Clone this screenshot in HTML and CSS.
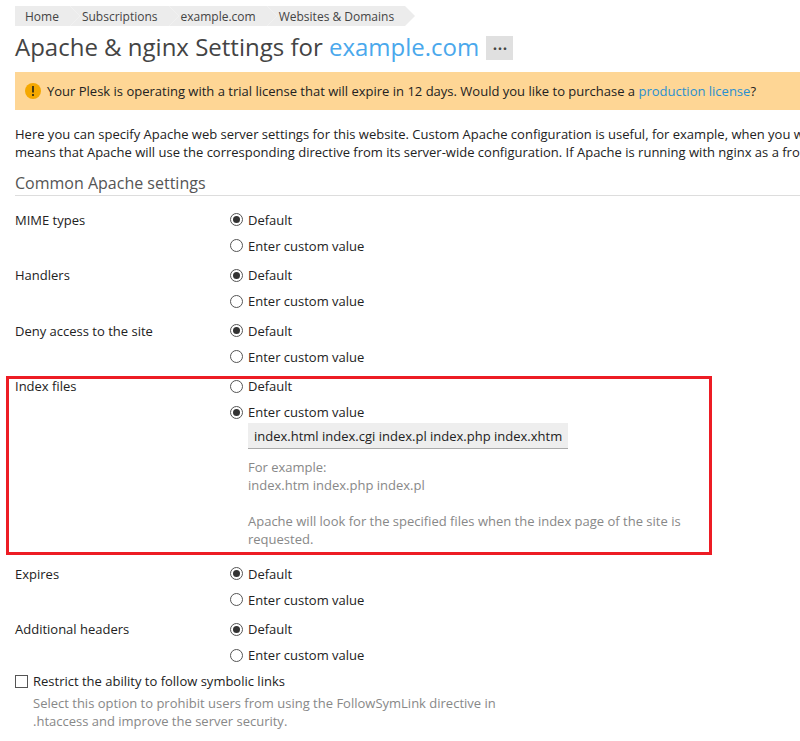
FILE: index.html
```html
<!DOCTYPE html>
<html lang="en">
<head>
    <meta charset="UTF-8">
    <title>Apache &amp; nginx Settings for example.com</title>
    <link rel="stylesheet" href="styles.css">
</head>
<body>
    <nav class="breadcrumbs">
        <a class="crumb">Home</a>
        <a class="crumb">Subscriptions</a>
        <a class="crumb">example.com</a>
        <a class="crumb">Websites &amp; Domains</a>
    </nav>
    <h1 class="title">Apache &amp; nginx Settings for <a class="title-link">example.com</a> <span class="more-btn">&middot;&middot;&middot;</span></h1>

    <div class="trial-msg">
        <svg class="warn-icon" width="16" height="16" viewBox="0 0 16 16">
            <circle cx="8" cy="8" r="8" fill="#f5a800"/>
            <rect x="7" y="3" width="2" height="6.5" fill="#4a3a10"/>
            <rect x="7" y="11" width="2" height="2" fill="#4a3a10"/>
        </svg>
        <span>Your Plesk is operating with a trial license that will expire in 12 days. Would you like to purchase a <a class="link">production license</a>?</span>
    </div>

    <p class="intro">Here you can specify Apache web server settings for this website. Custom Apache configuration is useful, for example, when you want to change the default settings.<br>means that Apache will use the corresponding directive from its server-wide configuration. If Apache is running with nginx as a front-end proxy server, some settings apply.</p>

    <h2 class="section-title">Common Apache settings</h2>

    <div class="form-row">
        <div class="row-label">MIME types</div>
        <div class="row-field">
            <div class="option"><span class="radio on"></span>Default</div>
            <div class="option"><span class="radio"></span>Enter custom value</div>
        </div>
    </div>
    <div class="form-row">
        <div class="row-label">Handlers</div>
        <div class="row-field">
            <div class="option"><span class="radio on"></span>Default</div>
            <div class="option"><span class="radio"></span>Enter custom value</div>
        </div>
    </div>
    <div class="form-row">
        <div class="row-label">Deny access to the site</div>
        <div class="row-field">
            <div class="option"><span class="radio on"></span>Default</div>
            <div class="option"><span class="radio"></span>Enter custom value</div>
        </div>
    </div>
    <div class="form-row index-row">
        <div class="highlight"></div>
        <div class="row-label">Index files</div>
        <div class="row-field">
            <div class="option"><span class="radio"></span>Default</div>
            <div class="option"><span class="radio on"></span>Enter custom value</div>
            <div class="text-input">index.html index.cgi index.pl index.php index.xhtm</div>
            <p class="hint">For example:<br>index.htm index.php index.pl</p>
            <p class="hint hint-last">Apache will look for the specified files when the index page of the site is requested.</p>
        </div>
    </div>
    <div class="form-row">
        <div class="row-label">Expires</div>
        <div class="row-field">
            <div class="option"><span class="radio on"></span>Default</div>
            <div class="option"><span class="radio"></span>Enter custom value</div>
        </div>
    </div>
    <div class="form-row">
        <div class="row-label">Additional headers</div>
        <div class="row-field">
            <div class="option"><span class="radio on"></span>Default</div>
            <div class="option"><span class="radio"></span>Enter custom value</div>
        </div>
    </div>

    <div class="check-row">
        <div class="check-line"><span class="checkbox"></span>Restrict the ability to follow symbolic links</div>
        <p class="hint check-hint">Select this option to prohibit users from using the FollowSymLink directive in .htaccess and improve the server security.</p>
    </div>
</body>
</html>
```

FILE: styles.css
```css
* {
    margin: 0;
    padding: 0;
    box-sizing: border-box;
}

html, body {
    height: 741px;
    overflow: hidden;
}

body {
    font-family: 'Open Sans', sans-serif;
    font-size: 13px;
    line-height: 18px;
    color: #222;
    background-color: #fff;
    padding: 6px 0 0 15px;
    width: 800px;
}

.breadcrumbs {
    display: flex;
    height: 20px;
}

.crumb {
    position: relative;
    height: 20px;
    line-height: 21px;
    font-size: 12px;
    color: #444;
    background-color: #ececec;
    padding-left: 10px;
    padding-right: 11px;
}

.crumb + .crumb {
    padding-left: 12px;
}

/* arrow tip between crumbs */
.crumb::after {
    content: "";
    position: absolute;
    top: 0;
    left: 100%;
    z-index: 1;
    border-left: 10px solid #ececec;
    border-top: 10px solid transparent;
    border-bottom: 10px solid transparent;
}

.crumb + .crumb::before {
    content: "";
    position: absolute;
    top: 0;
    left: 0;
    border-left: 10px solid #fff;
    border-top: 10px solid transparent;
    border-bottom: 10px solid transparent;
}

.title {
    font-size: 24px;
    font-weight: 400;
    line-height: 32px;
    color: #444;
    margin-top: 5px;
    white-space: nowrap;
}

.title-link {
    color: #4aa8ec;
}

.more-btn {
    display: inline-block;
    vertical-align: 1px;
    width: 27px;
    height: 24px;
    margin-left: 1px;
    background-color: #e0e0e0;
    color: #444;
    font-size: 18px;
    font-weight: 600;
    line-height: 25px;
    text-align: center;
}

.trial-msg {
    display: flex;
    align-items: center;
    gap: 6px;
    height: 38px;
    margin-top: 9px;
    padding-left: 10px;
    background-color: #fed695;
    white-space: nowrap;
    color: #222;
}

.warn-icon {
    flex: none;
}

.link {
    color: #2a8fd0;
}

.intro {
    margin-top: 15px;
    color: #222;
    white-space: nowrap;
}

.section-title {
    font-size: 16px;
    font-weight: 400;
    line-height: 22px;
    color: #555;
    margin-top: 11px;
    padding-bottom: 1px;
    border-bottom: 1px solid #ddd;
}

.form-row {
    display: flex;
    position: relative;
    margin-bottom: 3.5px;
}

.section-title + .form-row {
    margin-top: 10.6px;
}

.row-label {
    width: 215px;
    flex: none;
    line-height: 26px;
    color: #222;
}

.row-field {
    width: 440px;
}

.option {
    display: flex;
    align-items: center;
    height: 26px;
}

.radio {
    position: relative;
    flex: none;
    width: 13px;
    height: 13px;
    margin-right: 5px;
    border: 1px solid #555;
    border-radius: 50%;
    background-color: #fff;
}

.radio.on::after {
    content: "";
    position: absolute;
    top: 2px;
    left: 2px;
    width: 7px;
    height: 7px;
    border-radius: 50%;
    background-color: #333;
}

.text-input {
    width: 320px;
    height: 26px;
    margin-left: 18px;
    margin-top: -2px;
    padding-left: 6px;
    line-height: 26px;
    background-color: #eee;
    border-bottom: 1px solid #aaa;
    color: #222;
    white-space: nowrap;
}

.hint {
    color: #888;
    margin-left: 18px;
}

.text-input + .hint {
    margin-top: 9px;
}

.hint-last {
    margin-top: 18px;
    width: 440px;
}

.index-row {
    margin-bottom: 12.6px;
}

/* red annotation box drawn over the row */
.highlight {
    position: absolute;
    top: 2.6px;
    left: -9px;
    width: 706px;
    height: 179px;
    border: 3px solid #ed1c24;
    pointer-events: none;
}

.check-row {
    margin-top: -3.5px;
}

.check-line {
    display: flex;
    align-items: center;
    height: 26px;
}

.checkbox {
    flex: none;
    width: 13px;
    height: 13px;
    margin-right: 5px;
    border: 1px solid #555;
    background-color: #fff;
}

.check-hint {
    width: 480px;
    margin-top: 0;
}
```
